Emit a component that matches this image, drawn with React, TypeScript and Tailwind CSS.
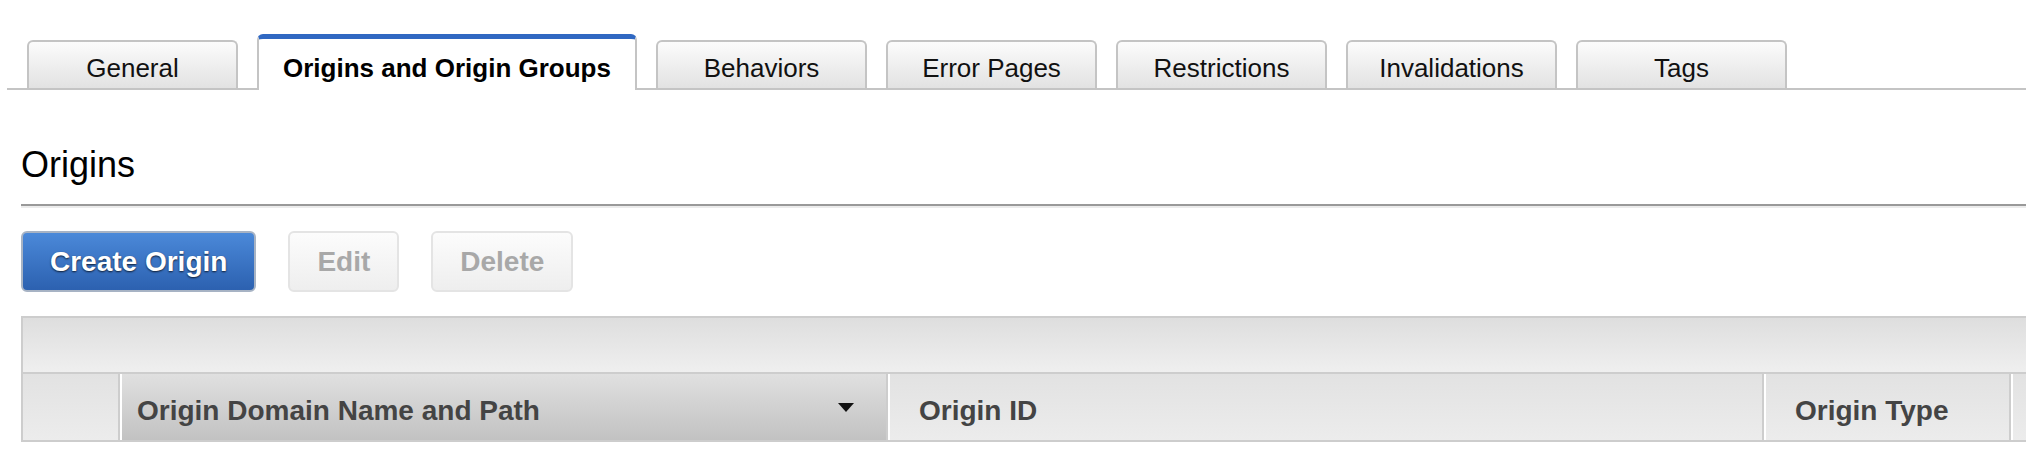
const tabs = [
  "General",
  "Origins and Origin Groups",
  "Behaviors",
  "Error Pages",
  "Restrictions",
  "Invalidations",
  "Tags",
];

const activeTab = "Origins and Origin Groups";

export default function App() {
  return (
    <div className="w-full h-[462px] overflow-hidden bg-white font-['Liberation_Sans',Arial,sans-serif] text-black">
      <div className="w-[2100px]">
        {/* Tab strip */}
        <div className="ml-[7px] mt-[34px] flex items-end gap-[19px] border-b-2 border-[#c4c4c4] pl-[20px]">
          {tabs.map((tab) =>
            tab === activeTab ? (
              <div
                key={tab}
                className="-mb-[2px] h-[56px] w-[380px] rounded-t-[6px] border-x-2 border-t-[5px] border-x-[#c4c4c4] border-t-[#3068c2] bg-white pt-[14px] text-center text-[26px] font-bold leading-[30px]"
              >
                {tab}
              </div>
            ) : (
              <div
                key={tab}
                className="h-[48px] w-[211px] rounded-t-[6px] border-2 border-b-0 border-[#c4c4c4] bg-linear-to-b from-[#fcfcfc] to-[#e2e2e2] pt-[11px] text-center text-[26px] leading-[30px] text-[#111]"
              >
                {tab}
              </div>
            )
          )}
        </div>

        {/* Section heading */}
        <div className="ml-[21px]">
          <h2 className="mt-[54px] pb-[18px] text-[36px] leading-[42px]">Origins</h2>
          <div className="h-[2px] bg-[#999]" />
          <div className="h-[2px] bg-[#ececec]" />
        </div>

        {/* Actions */}
        <div className="ml-[21px] mt-[23px] flex gap-[32px]">
          <button className="flex h-[61px] items-center rounded-[6px] border-2 border-[#a7b3c4] bg-linear-to-b from-[#4b89d9] to-[#2c61b0] px-[27px] text-[28px] font-bold leading-[32px] text-white [text-shadow:0_1px_2px_rgba(0,0,0,0.75)]">
            Create Origin
          </button>
          <button className="flex h-[61px] items-center rounded-[6px] border-2 border-[#e4e4e4] bg-linear-to-b from-[#fcfcfc] to-[#eeeeee] px-[27px] text-[28px] font-bold leading-[32px] text-[#a8a8a8]">
            Edit
          </button>
          <button className="flex h-[61px] items-center rounded-[6px] border-2 border-[#e4e4e4] bg-linear-to-b from-[#fcfcfc] to-[#eeeeee] px-[27px] text-[28px] font-bold leading-[32px] text-[#a8a8a8]">
            Delete
          </button>
        </div>

        {/* Table header */}
        <div className="ml-[21px] mt-[24px] w-[2079px] border-2 border-[#cdcdcd]">
          <div className="h-[56px] border-b-2 border-[#cdcdcd] bg-linear-to-b from-[#dedede] to-[#efefef]" />
          <div className="flex h-[66px] text-[28px] font-bold leading-[32px] text-[#444]">
            <div className="w-[95px] bg-linear-to-b from-[#e2e2e2] to-[#ececec]" />
            <div className="flex w-[768px] items-center justify-between border-l-2 border-[#cdcdcd] bg-linear-to-b from-[#e0e0e0] to-[#c2c2c2] pl-[17px] pr-[32px] shadow-[inset_2px_0_0_#fff]">
              <span className="pt-[7px]">Origin Domain Name and Path</span>
              <svg width="16" height="9" viewBox="0 0 16 9">
                <path d="M0 0 H16 L8 9 Z" fill="#111" />
              </svg>
            </div>
            <div className="flex w-[876px] items-center border-l-2 border-[#cdcdcd] bg-linear-to-b from-[#e2e2e2] to-[#ececec] pl-[31px] shadow-[inset_2px_0_0_#fff]">
              <span className="pt-[7px]">Origin ID</span>
            </div>
            <div className="flex w-[247px] items-center border-l-2 border-[#cdcdcd] bg-linear-to-b from-[#e2e2e2] to-[#ececec] pl-[31px] shadow-[inset_2px_0_0_#fff]">
              <span className="pt-[7px]">Origin Type</span>
            </div>
            <div className="flex-1 border-l-2 border-[#cdcdcd] bg-linear-to-b from-[#e2e2e2] to-[#ececec] shadow-[inset_2px_0_0_#fff]" />
          </div>
        </div>
      </div>
    </div>
  );
}
